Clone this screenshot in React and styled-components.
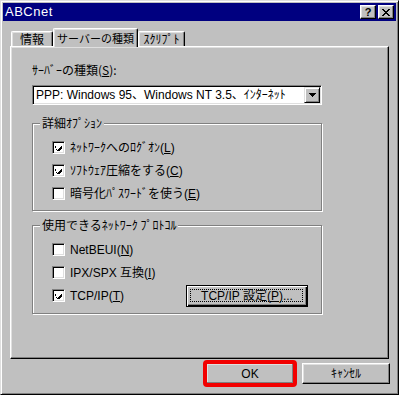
import React from 'react';
import styled, { createGlobalStyle } from 'styled-components';

const GlobalStyle = createGlobalStyle`
  html, body {
    margin: 0;
    padding: 0;
    background: #c0c0c0;
  }
  body {
    font-family: "Noto Sans CJK JP", "Liberation Sans", sans-serif;
    font-size: 12px;
    color: #000;
  }
`

const Window = styled.div`
  width: 399px;
  height: 395px;
  box-sizing: border-box;
  display: flex;
  flex-direction: column;
  background: #c0c0c0;
  border: 1px solid;
  border-color: #dfdfdf #000 #000 #dfdfdf;
  box-shadow: inset 1px 1px #fff, inset -1px -1px #808080;
  padding: 2px;
`

const TitleBar = styled.div`
  height: 18px;
  background: #000080;
  display: flex;
  align-items: center;
  padding: 0 2px 0 2px;
  color: #fff;
`

const TitleText = styled.span`
  flex: 1;
  font-family: "Liberation Sans", sans-serif;
  font-size: 13px;
  letter-spacing: 0.5px;
  line-height: 18px;
`

const CaptionButton = styled.div`
  width: 16px;
  height: 14px;
  box-sizing: border-box;
  background: #c0c0c0;
  border: 1px solid;
  border-color: #fff #000 #000 #fff;
  box-shadow: inset -1px -1px #808080, inset 1px 1px #dfdfdf;
  display: flex;
  align-items: center;
  justify-content: center;
  color: #000;
  font-family: "Liberation Sans", sans-serif;
  font-weight: bold;
  font-size: 11px;
  line-height: 12px;
  margin-left: ${p => (p.$gap ? '2px' : '0')};
`

const Body = styled.div`
  flex: 1;
  display: flex;
  flex-direction: column;
  padding: 7px 7px 0 7px;
`

const TabRow = styled.div`
  display: flex;
  align-items: flex-end;
  padding-left: 1px;
  height: 18px;
  position: relative;
  z-index: 1;
`

const Tab = styled.div`
  box-sizing: border-box;
  width: ${p => p.$w}px;
  height: ${p => (p.$active ? 19 : 15)}px;
  margin-bottom: ${p => (p.$active ? '-1px' : '0')};
  background: #c0c0c0;
  border-top: 1px solid #fff;
  border-left: 1px solid #fff;
  border-right: 1px solid #000;
  border-radius: 2px 2px 0 0;
  box-shadow: inset -1px 0 #808080, inset 1px 1px #dfdfdf;
  display: flex;
  justify-content: center;
  padding-top: ${p => (p.$active ? '2px' : '0')};
  line-height: 14px;
  white-space: nowrap;
  font-size: ${p => (p.$active ? '11px' : '12px')};
`

const Panel = styled.div`
  height: 313px;
  box-sizing: border-box;
  border: 1px solid;
  border-color: #fff #000 #000 #fff;
  box-shadow: inset -1px -1px #808080, inset 1px 1px #dfdfdf;
  padding: 15px 0 0 21px;
  display: flex;
  flex-direction: column;
  align-items: flex-start;
`

const Label = styled.div`
  line-height: 16px;
  height: 16px;
  white-space: nowrap;
`

const Select = styled.div`
  margin-top: 7px;
  width: 290px;
  height: 20px;
  box-sizing: border-box;
  background: #fff;
  border: 1px solid;
  border-color: #808080 #fff #fff #808080;
  box-shadow: inset 1px 1px #000, inset -1px -1px #dfdfdf;
  display: flex;
  align-items: center;
  padding: 1px 1px 1px 3px;
`

const SelectText = styled.span`
  flex: 1;
  font-family: "Liberation Sans", "Noto Sans CJK JP", sans-serif;
  white-space: nowrap;
  line-height: 16px;
`

const ArrowButton = styled.div`
  width: 16px;
  height: 16px;
  box-sizing: border-box;
  background: #c0c0c0;
  border: 1px solid;
  border-color: #dfdfdf #000 #000 #dfdfdf;
  box-shadow: inset 1px 1px #fff, inset -1px -1px #808080;
  display: flex;
  align-items: center;
  justify-content: center;
`

const Group = styled.div`
  position: relative;
  width: 290px;
  box-sizing: border-box;
  margin-top: ${p => p.$top}px;
  height: ${p => p.$h}px;
  border: 1px solid #808080;
  box-shadow: inset 1px 1px #fff, 1px 1px #fff;
  padding: 12px 13px 0 19px;
  display: flex;
  flex-direction: column;
`

const Legend = styled.span`
  position: absolute;
  top: -9px;
  left: 7px;
  padding: 0 2px;
  background: #c0c0c0;
  line-height: 16px;
  white-space: nowrap;
`

const Row = styled.div`
  height: 23px;
  display: flex;
  align-items: center;
`

const Box = styled.div`
  width: 13px;
  height: 13px;
  box-sizing: border-box;
  background: #fff;
  border: 1px solid;
  border-color: #808080 #fff #fff #808080;
  box-shadow: inset 1px 1px #000, inset -1px -1px #dfdfdf;
  display: flex;
  align-items: center;
  justify-content: center;
  margin-right: 5px;
  flex-shrink: 0;
`

const RowText = styled.span`
  font-family: "Liberation Sans", "Noto Sans CJK JP", sans-serif;
  line-height: 16px;
  white-space: nowrap;
`

const Button = styled.div`
  box-sizing: border-box;
  width: ${p => p.$w}px;
  height: ${p => p.$h}px;
  background: #c0c0c0;
  border: 1px solid;
  border-color: #fff #000 #000 #fff;
  box-shadow: inset -1px -1px #808080, inset 1px 1px #dfdfdf;
  display: flex;
  align-items: center;
  justify-content: center;
  font-family: "Liberation Sans", "Noto Sans CJK JP", sans-serif;
  line-height: 16px;
  white-space: nowrap;
  position: relative;
`

const DefaultButton = styled(Button)`
  margin-left: auto;
  border: 1px solid #000;
  box-shadow: inset 1px 1px #fff, inset -1px -1px #000, inset -2px -2px #808080;
`

const FocusRing = styled.span`
  position: absolute;
  inset: 3px 4px 4px 3px;
  border: 1px dotted #000;
`

const ButtonRow = styled.div`
  display: flex;
  justify-content: flex-end;
  gap: 8px;
  margin-top: 4px;
  margin-right: -1px;
`

const Highlighted = styled(Button)`
  outline: 4px solid #f20000;
  outline-offset: -1px;
  border-radius: 1px;
`

const Check = () => (
  <svg width="7" height="7" viewBox="0 0 7 7" shapeRendering="crispEdges">
    <path d="M0 2h1v3h1v1h1v-1h1v-1h1v-1h1v-1h1v3h-1v1h-1v1h-1v1h-1v-1h-1v-1h-1z" fill="#000" />
  </svg>
)

const Checkbox = ({ checked }) => <Box>{checked && <Check />}</Box>

const Arrow = () => (
  <svg width="7" height="4" viewBox="0 0 7 4" shapeRendering="crispEdges">
    <path d="M0 0h7v1h-1v1h-1v1h-1v1h-1v-1h-1v-1h-1v-1h-1z" fill="#000" />
  </svg>
)

const CloseGlyph = () => (
  <svg width="8" height="7" viewBox="0 0 8 7" shapeRendering="crispEdges">
    <path d="M0 0h2v1h1v1h2v-1h1v-1h2v1h-1v1h-1v1h-1v1h1v1h1v1h1v1h-2v-1h-1v-1h-2v1h-1v1h-2v-1h1v-1h1v-1h1v-1h-1v-1h-1v-1h-1z" fill="#000" />
  </svg>
)

function App() {
  return (
    <>
      <GlobalStyle />
      <Window>
        <TitleBar>
          <TitleText>ABCnet</TitleText>
          <CaptionButton>?</CaptionButton>
          <CaptionButton $gap>
            <CloseGlyph />
          </CaptionButton>
        </TitleBar>

        <Body>
          <TabRow>
            <Tab $w={42}>情報</Tab>
            <Tab $w={85} $active>サーバーの種類</Tab>
            <Tab $w={47}>ｽｸﾘﾌﾟﾄ</Tab>
          </TabRow>

          <Panel>
            <Label>ｻｰﾊﾞｰの種類(<u>S</u>):</Label>
            <Select>
              <SelectText>PPP: Windows 95、Windows NT 3.5、ｲﾝﾀｰﾈｯﾄ</SelectText>
              <ArrowButton>
                <Arrow />
              </ArrowButton>
            </Select>

            <Group $top={18} $h={88}>
              <Legend>詳細ｵﾌﾟｼｮﾝ</Legend>
              <Row>
                <Checkbox checked />
                <RowText>ﾈｯﾄﾜｰｸへのﾛｸﾞｵﾝ(<u>L</u>)</RowText>
              </Row>
              <Row>
                <Checkbox checked />
                <RowText>ｿﾌﾄｳｪｱ圧縮をする(<u>C</u>)</RowText>
              </Row>
              <Row>
                <Checkbox />
                <RowText>暗号化ﾊﾟｽﾜｰﾄﾞを使う(<u>E</u>)</RowText>
              </Row>
            </Group>

            <Group $top={14} $h={89}>
              <Legend>使用できるﾈｯﾄﾜｰｸ ﾌﾟﾛﾄｺﾙ</Legend>
              <Row>
                <Checkbox />
                <RowText>NetBEUI(<u>N</u>)</RowText>
              </Row>
              <Row>
                <Checkbox />
                <RowText>IPX/SPX 互換(<u>I</u>)</RowText>
              </Row>
              <Row>
                <Checkbox checked />
                <RowText>TCP/IP(<u>T</u>)</RowText>
                <DefaultButton $w={122} $h={22}>
                  <FocusRing />
                  TCP/IP 設定(<u>P</u>)...
                </DefaultButton>
              </Row>
            </Group>
          </Panel>

          <ButtonRow>
            <Highlighted $w={88} $h={21}>OK</Highlighted>
            <Button $w={88} $h={21}>ｷｬﾝｾﾙ</Button>
          </ButtonRow>
        </Body>
      </Window>
    </>
  );
}

export default App
